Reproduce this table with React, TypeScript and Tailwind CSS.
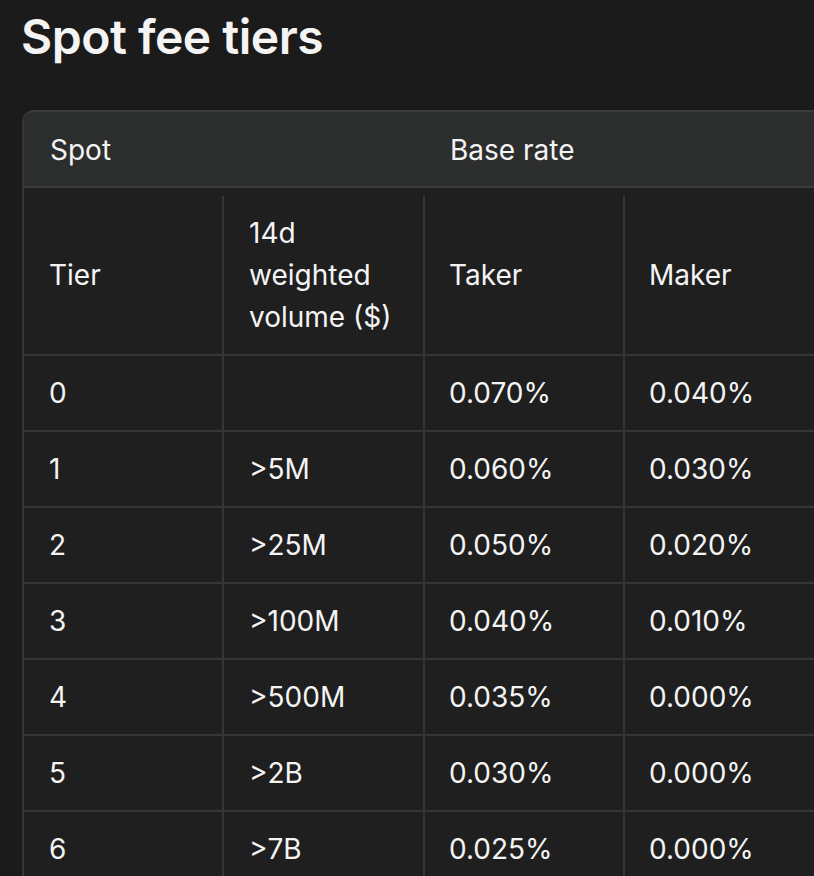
import React from "react";

const rows: [string, string, string, string][] = [
  ["0", "", "0.070%", "0.040%"],
  ["1", ">5M", "0.060%", "0.030%"],
  ["2", ">25M", "0.050%", "0.020%"],
  ["3", ">100M", "0.040%", "0.010%"],
  ["4", ">500M", "0.035%", "0.000%"],
  ["5", ">2B", "0.030%", "0.000%"],
  ["6", ">7B", "0.025%", "0.000%"],
];

export default function App() {
  return (
    <div
      className="w-[814px] h-[876px] overflow-hidden bg-[#1b1b1b] text-[#f4f4f4] pl-[22px]"
      style={{ fontFamily: "Inter, 'Noto Sans', sans-serif" }}
    >
      <h1 className="pt-[8px] text-[48px] leading-[58px] font-semibold tracking-[-0.5px] ml-[-1px]">
        Spot fee tiers
      </h1>
      <div className="mt-[44px] w-[1100px] border-l-2 border-t-2 border-[#353636] rounded-tl-[12px] bg-[#1f1f1f] text-[28px] leading-[42px]">
        <div className="flex bg-[#2c2d2d] rounded-tl-[10px] border-t-2 border-b-2 border-[#3a3b3b] mt-[-2px]">
          <div className="w-[400px] pl-[26px] pt-[17px] pb-[15px]">Spot</div>
          <div className="pl-[26px] pt-[17px] pb-[15px]">Base rate</div>
        </div>
        <div className="flex pt-[8px] border-b-2 border-[#363636]">
          <div className="w-[198px] pl-[25px] py-[16px] flex items-center">Tier</div>
          <div className="w-[201px] border-l-2 border-[#363636] pl-[25px] py-[16px]">
            14d
            <br />
            weighted
            <br />
            volume ($)
          </div>
          <div className="w-[200px] border-l-2 border-[#363636] pl-[24px] py-[16px] flex items-center">
            Taker
          </div>
          <div className="w-[200px] border-l-2 border-[#363636] pl-[24px] py-[16px] flex items-center">
            Maker
          </div>
          <div className="flex-1 border-l-2 border-[#363636]"></div>
        </div>
        {rows.map((r, i) => (
          <div key={i} className="flex border-b-2 border-[#363636]">
            <div className="w-[198px] pl-[25px] py-[16px]">{r[0]}</div>
            <div className="w-[201px] border-l-2 border-[#363636] pl-[25px] py-[16px]">{r[1]}</div>
            <div className="w-[200px] border-l-2 border-[#363636] pl-[24px] py-[16px]">{r[2]}</div>
            <div className="w-[200px] border-l-2 border-[#363636] pl-[24px] py-[16px]">{r[3]}</div>
            <div className="flex-1 border-l-2 border-[#363636]"></div>
          </div>
        ))}
      </div>
    </div>
  );
}
